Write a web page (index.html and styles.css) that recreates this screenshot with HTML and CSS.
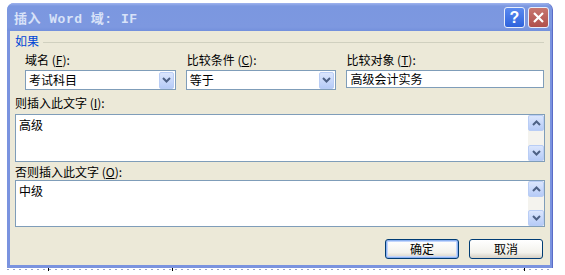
FILE: index.html
```html
<!DOCTYPE html>
<html lang="zh-CN">
<head>
    <meta charset="UTF-8">
    <title>插入 Word 域: IF</title>
    <link rel="stylesheet" href="styles.css">
</head>
<body>
    <div class="dialog">
        <div class="titlebar">
            <span class="title">插入 Word 域: IF</span>
            <div class="title-buttons">
                <span class="tbtn help">?</span>
                <span class="tbtn close">
                    <svg width="13" height="13" viewBox="0 0 13 13"><path d="M2 2 L11 11 M11 2 L2 11" stroke="#fff" stroke-width="2.2"/></svg>
                </span>
            </div>
        </div>
        <div class="content">
            <div class="group-head">
                <span class="group-title">如果</span>
                <span class="group-line"></span>
            </div>
            <div class="fields">
                <div class="field field-name">
                    <label>域名 (<u>F</u>):</label>
                    <div class="select">
                        <span class="select-text">考试科目</span>
                        <span class="drop">
                            <svg width="9" height="6" viewBox="0 0 9 6"><path d="M1 1 L4.5 4.5 L8 1" fill="none" stroke="#4d6185" stroke-width="2"/></svg>
                        </span>
                    </div>
                </div>
                <div class="field field-cond">
                    <label>比较条件 (<u>C</u>):</label>
                    <div class="select">
                        <span class="select-text">等于</span>
                        <span class="drop">
                            <svg width="9" height="6" viewBox="0 0 9 6"><path d="M1 1 L4.5 4.5 L8 1" fill="none" stroke="#4d6185" stroke-width="2"/></svg>
                        </span>
                    </div>
                </div>
                <div class="field field-obj">
                    <label>比较对象 (<u>T</u>):</label>
                    <div class="textbox">高级会计实务</div>
                </div>
            </div>

            <label class="area-label first">则插入此文字 (<u>I</u>):</label>
            <div class="area area-top">
                <div class="area-text">高级</div>
                <div class="scrollbar">
                    <span class="sbtn"><svg width="9" height="6" viewBox="0 0 9 6"><path d="M1 5 L4.5 1.5 L8 5" fill="none" stroke="#4d6185" stroke-width="2"/></svg></span>
                    <span class="sbtn"><svg width="9" height="6" viewBox="0 0 9 6"><path d="M1 1 L4.5 4.5 L8 1" fill="none" stroke="#4d6185" stroke-width="2"/></svg></span>
                </div>
            </div>

            <label class="area-label second">否则插入此文字 (<u>O</u>):</label>
            <div class="area area-bottom">
                <div class="area-text">中级</div>
                <div class="scrollbar">
                    <span class="sbtn"><svg width="9" height="6" viewBox="0 0 9 6"><path d="M1 5 L4.5 1.5 L8 5" fill="none" stroke="#4d6185" stroke-width="2"/></svg></span>
                    <span class="sbtn"><svg width="9" height="6" viewBox="0 0 9 6"><path d="M1 1 L4.5 4.5 L8 1" fill="none" stroke="#4d6185" stroke-width="2"/></svg></span>
                </div>
            </div>

            <div class="actions">
                <button class="btn default">确定</button>
                <button class="btn">取消</button>
            </div>
        </div>
    </div>
    <svg class="table-edge" width="546" height="3" viewBox="0 0 546 3">
        <line x1="0" y1="1.5" x2="546" y2="1.5" stroke="#9aa3c8" stroke-width="1" stroke-dasharray="2 4"/>
        <rect x="41" y="0" width="1" height="3" fill="#000"/>
        <rect x="165" y="0" width="1" height="3" fill="#000"/>
        <rect x="517" y="0" width="1" height="3" fill="#000"/>
    </svg>
</body>
</html>
```

FILE: styles.css
```css
body {
    margin: 0;
    padding: 0;
    background: #ffffff;
    font-family: "Noto Sans CJK SC", "Liberation Sans", sans-serif;
    font-size: 12px;
    color: #000;
}
.dialog {
    margin: 3px 0 0 7px;
    width: 546px;
    height: 265px;
    box-sizing: border-box;
    background: #7a93df;
    border-radius: 7px 7px 0 0;
    border-right: 1px solid #5a6cc8;
    padding: 0 2px 3px 3px;
    display: flex;
    flex-direction: column;
}
.titlebar {
    height: 28px;
    display: flex;
    align-items: center;
    justify-content: space-between;
    background: linear-gradient(to bottom, #a0b4ee 0px, #7b97e0 3px, #7d98e0 24px, #7390dc 28px);
    margin: 0 -2px 0 -3px;
    padding: 0 3px 0 7px;
    border-radius: 7px 7px 0 0;
}
.title {
    font-family: "Liberation Mono", "Noto Sans CJK SC", monospace;
    font-weight: bold;
    font-size: 13px;
    color: #d8e2f8;
    letter-spacing: 0.5px;
}
.title-buttons {
    display: flex;
    gap: 3px;
    padding-top: 1px;
}
.tbtn {
    width: 19px;
    height: 19px;
    border: 1px solid #e8eefc;
    border-radius: 3px;
    display: flex;
    align-items: center;
    justify-content: center;
    color: #fff;
    font-family: "Liberation Sans", sans-serif;
    font-weight: bold;
    font-size: 16px;
}
.help {
    background: linear-gradient(to bottom, #5a8af0, #2e62dc);
}
.close {
    background: linear-gradient(to bottom, #c7766f, #b0504c);
}
.content {
    flex: 1;
    background: #ece9d8;
    padding: 3px 6px 0 5px;
    display: flex;
    flex-direction: column;
}
.group-head {
    height: 14px;
    display: flex;
    align-items: center;
    gap: 4px;
}
.group-title {
    color: #0046d5;
    line-height: 14px;
}
.group-line {
    flex: 1;
    height: 1px;
    background: #d0d0bf;
    margin-top: 2px;
}
.fields {
    display: flex;
    gap: 10px;
    margin: 5px 0 0 10px;
}
.field label {
    display: block;
    line-height: 14px;
    height: 14px;
    margin-bottom: 3px;
}
.field-name, .field-cond {
    width: 151px;
}
.field-cond label {
    padding-left: 1px;
}
.field-obj {
    width: 198px;
}
.select {
    height: 20px;
    box-sizing: border-box;
    border: 1px solid #7f9db9;
    background: #fff;
    display: flex;
    align-items: center;
    justify-content: space-between;
    padding: 0 1px 0 3px;
}
.select-text {
    line-height: 14px;
}
.drop, .sbtn {
    width: 15px;
    height: 16px;
    box-sizing: border-box;
    border: 1px solid #b9cdf5;
    border-radius: 2px;
    background: linear-gradient(to bottom, #dbe6fd, #b6cbf7);
    display: flex;
    align-items: center;
    justify-content: center;
}
.drop {
    height: 17px;
}
.textbox {
    height: 18px;
    box-sizing: border-box;
    border: 1px solid #7f9db9;
    background: #fff;
    padding: 0 3px;
    line-height: 16px;
    margin-top: 1px;
}
.area-label {
    display: block;
    line-height: 14px;
    height: 14px;
}
.area-label.first {
    margin-top: 6px;
}
.area-label.second {
    margin-top: 3px;
}
.area {
    margin-right: 0;
    width: 530px;
    box-sizing: border-box;
    border: 1px solid #7f9db9;
    background: #fff;
    display: flex;
    justify-content: space-between;
}
.area-top {
    margin-top: 4px;
    height: 48px;
}
.area-bottom {
    margin-top: 1px;
    height: 47px;
}
.area-text {
    padding: 3px 0 0 3px;
    line-height: 14px;
}
.scrollbar {
    width: 16px;
    background: #f4f3ee;
    display: flex;
    flex-direction: column;
    justify-content: space-between;
    padding: 0 0 0 0;
}
.sbtn {
    width: 16px;
    height: 16px;
}
.actions {
    display: flex;
    justify-content: flex-end;
    gap: 10px;
    margin: 12px 1px 0 0;
}
.btn {
    width: 74px;
    height: 20px;
    border: 1px solid #003c74;
    border-radius: 3px;
    background: linear-gradient(to bottom, #ffffff, #f3f2ec 70%, #d6d0c5);
    font-family: "Noto Sans CJK SC", sans-serif;
    font-size: 12px;
    line-height: 14px;
    padding: 0;
    color: #000;
}
.btn.default {
    box-shadow: inset 0 0 0 1px #8db2f0, inset 0 0 0 2px #c2d5fc;
}
.table-edge {
    display: block;
    margin-left: 7px;
}
```
